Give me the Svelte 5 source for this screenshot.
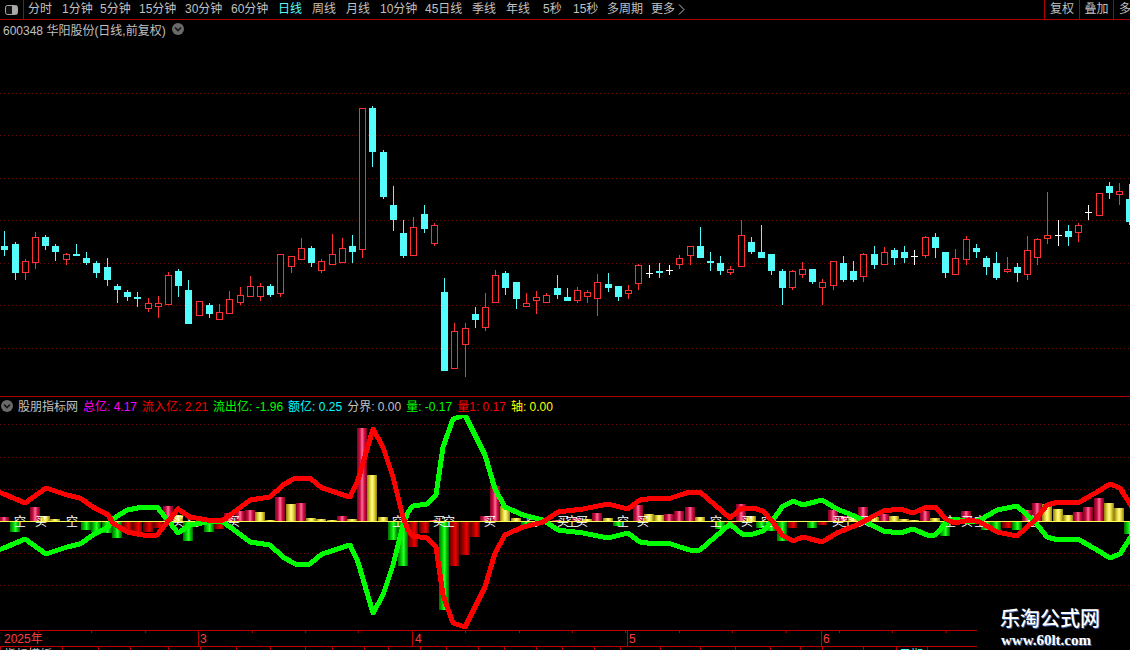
<script>
  const tabs = [
    ['分时', 34], ['1分钟', 38], ['5分钟', 39], ['15分钟', 46], ['30分钟', 46], ['60分钟', 47],
    ['日线', 34, true], ['周线', 34], ['月线', 34], ['10分钟', 45], ['45日线', 47], ['季线', 34],
    ['年线', 37], ['5秒', 30], ['15秒', 34], ['多周期', 44], ['更多', 27]
  ];

  const legend = [
    ['总亿: 4.17', 'mag'], ['流入亿: 2.21', 'red'], ['流出亿: -1.96', 'grn'], ['额亿: 0.25', 'cya'],
    ['分界: 0.00', 'gry'], ['量: -0.17', 'grn'], ['量1: 0.17', 'red'], ['轴: 0.00', 'yel']
  ];

  // x, high, bodyTop, bodyBottom, low, kind (0 cyan, 1 red, 2 white doji)
  const candles = [
    [4,231,246,250,256,0],[15,242,244,273,280,0],[25,259,261,272,280,1],[35,232,237,262,269,1],
    [45,235,237,246,250,0],[55,244,246,252,261,0],[66,253,254,259,265,1],[76,244,254,256,256,0],
    [86,252,258,263,265,0],[96,261,263,273,278,0],[107,258,267,280,286,0],[117,284,286,290,303,0],
    [127,290,292,297,301,0],[137,292,297,299,307,0],[148,298,303,308,312,1],[158,296,303,306,318,1],
    [168,272,275,304,304,1],[178,269,271,286,297,0],[188,280,290,324,324,0],[199,301,301,315,316,1],
    [209,303,305,314,318,0],[219,304,312,319,320,1],[229,291,299,313,314,1],[240,287,295,302,305,1],
    [250,276,286,296,297,1],[260,283,286,296,301,1],[270,284,286,295,297,0],[280,254,254,293,297,1],
    [291,256,256,266,273,1],[301,238,248,259,259,1],[311,246,248,263,267,0],[321,259,261,270,273,1],
    [332,234,254,264,264,1],[342,238,248,262,263,1],[352,235,246,252,263,0],[362,108,108,249,258,1],
    [372,106,108,152,167,0],[383,150,152,197,199,0],[393,186,205,220,231,0],[403,220,233,256,258,0],
    [413,217,227,255,255,1],[424,205,214,229,233,0],[434,223,225,243,246,1],[444,278,292,371,371,0],
    [454,323,331,368,368,1],[465,323,328,344,377,1],[475,307,314,320,328,0],[485,293,307,327,331,1],
    [495,270,275,302,303,1],[505,271,273,288,295,0],[516,282,282,299,309,0],[526,293,303,306,307,1],
    [536,291,297,300,314,1],[546,293,295,302,303,1],[557,275,288,295,299,0],[567,288,297,301,301,0],
    [577,287,290,300,303,1],[587,290,292,296,303,1],[597,274,282,298,316,1],[608,273,284,288,292,0],
    [618,286,286,297,301,0],[628,285,290,293,299,1],[638,264,265,283,290,1],[649,265,273,273,278,2],
    [659,263,271,273,278,0],[669,265,270,270,275,2],[679,255,258,264,269,1],[690,246,246,255,265,1],
    [700,227,246,258,258,0],[710,252,261,263,271,0],[720,256,263,271,275,0],[730,266,269,272,275,1],
    [741,220,235,266,266,1],[751,237,242,252,254,0],[761,225,252,258,258,0],[771,254,254,271,275,0],
    [782,269,271,288,305,0],[792,270,271,287,290,1],[802,262,269,274,278,1],[812,269,269,282,284,0],
    [822,279,282,287,305,1],[833,261,261,285,290,1],[843,256,263,280,282,0],[853,261,271,280,282,0],
    [863,253,254,276,282,1],[874,246,254,265,269,0],[884,247,252,264,265,1],[894,248,250,258,265,0],
    [904,246,252,258,263,0],[914,250,256,256,265,2],[925,236,237,255,258,1],[935,233,237,248,258,0],
    [945,252,252,273,278,0],[955,249,258,274,275,1],[966,236,239,259,265,1],[976,244,248,252,258,0],
    [986,256,258,267,275,0],[996,252,263,278,280,0],[1007,257,269,271,273,1],[1017,263,267,273,282,0],
    [1027,236,250,274,280,1],[1037,238,239,257,265,1],[1047,192,235,238,244,1],[1058,220,235,235,246,2],
    [1068,225,231,237,246,0],[1078,223,225,232,242,1],[1088,205,212,212,220,2],[1099,193,193,215,216,1],
    [1109,182,186,193,199,0],[1119,183,191,194,205,1],[1129,184,199,222,225,0]
  ];

  const upperGrid = [93, 135, 178, 220, 263, 305, 348];
  const lowerGrid = [424, 457, 489, 553, 585];

  const zero = 521;
  // x, level, colour (p pink up, y yellow up, g green down, r red down)
  const bars = [
    [4,517,'p'],[15,532,'g'],[35,507,'p'],[45,516,'y'],[55,519,'y'],[86,530,'g'],[96,532,'g'],[107,533,'g'],
    [117,538,'g'],[127,532,'r'],[137,532,'r'],[148,532,'r'],[158,528,'r'],[168,506,'p'],[178,515,'y'],
    [188,541,'g'],[209,532,'g'],[219,529,'r'],[229,513,'p'],[240,511,'p'],[250,510,'p'],[260,512,'y'],
    [270,520,'y'],[280,497,'p'],[291,504,'y'],[301,503,'p'],[311,518,'y'],[321,519,'y'],[332,520,'y'],
    [342,516,'p'],[352,519,'y'],[362,428,'p'],[372,475,'y'],[383,517,'y'],[393,540,'g'],[403,566,'g'],
    [413,547,'r'],[424,533,'r'],[434,520,'p'],[444,610,'g'],[454,566,'r'],[465,555,'r'],[475,537,'r'],
    [485,516,'p'],[495,486,'p'],[505,506,'y'],[516,518,'y'],[526,525,'g'],[557,520,'p'],[577,518,'p'],
    [587,519,'y'],[597,513,'p'],[608,518,'y'],[618,526,'g'],[638,505,'p'],[649,514,'y'],[659,515,'y'],
    [669,514,'p'],[679,511,'p'],[690,507,'p'],[700,517,'y'],[710,522,'g'],[720,529,'g'],[730,525,'r'],
    [741,504,'p'],[751,516,'y'],[761,528,'g'],[771,531,'g'],[782,541,'g'],[792,528,'r'],[812,528,'g'],
    [822,525,'r'],[833,510,'p'],[843,516,'p'],[853,518,'y'],[863,507,'p'],[874,517,'y'],[884,514,'p'],
    [894,516,'y'],[904,519,'y'],[914,520,'y'],[925,511,'p'],[935,518,'y'],[945,536,'g'],[966,511,'p'],
    [986,530,'g'],[996,531,'g'],[1007,528,'r'],[1017,530,'g'],[1027,510,'p'],[1037,503,'p'],[1047,504,'y'],
    [1058,509,'y'],[1068,515,'y'],[1078,512,'p'],[1088,507,'p'],[1099,498,'p'],[1109,503,'y'],[1119,508,'y'],
    [1129,534,'g']
  ];
  const fills = { p: 'url(#pink)', y: 'url(#gold)', g: 'url(#lime)', r: 'url(#crim)' };

  const inflow = [
    [-2,492],[4,494],[25,503],[46,488],[67,495],[80,498],[93,507],[108,515],[113,523],[127,532],[143,535],[157,535],
    [178,509],[190,517],[213,521],[223,520],[237,510],[250,500],[270,497],[283,485],[295,478],[310,478],[322,488],
    [350,497],[358,480],[373,429],[383,447],[393,477],[403,517],[408,530],[413,536],[427,538],[436,547],[443,595],
    [453,623],[465,627],[485,587],[495,553],[505,535],[523,527],[543,522],[558,512],[583,509],[608,504],[628,509],
    [640,500],[655,498],[668,499],[680,495],[690,492],[700,492],[730,518],[742,508],[753,508],[763,511],[773,522],
    [782,535],[793,541],[803,537],[822,542],[837,533],[857,525],[883,511],[900,509],[913,513],[927,507],[935,507],
    [947,520],[955,523],[970,520],[980,522],[997,532],[1017,536],[1035,520],[1047,505],[1058,502],[1078,503],
    [1097,492],[1110,484],[1120,488],[1132,507]
  ];
  const redLine = inflow.map(([x, y]) => `${x},${y}`).join(' ');
  const greenLine = inflow.map(([x, y]) => `${x},${2 * zero - y}`).join(' ');

  const marks = [
    [20,'空'],[41,'买'],[72,'空'],[178,'买'],[193,'空'],[234,'买'],[398,'空'],[439,'买'],[449,'空'],[490,'买'],
    [532,'空'],[563,'买'],[572,'空'],[582,'买'],[623,'空'],[643,'买'],[716,'空'],[747,'买'],[767,'空'],[838,'买'],
    [848,'空'],[864,'买'],[950,'空'],[967,'买'],[980,'空'],[1033,'空']
  ];

  const ticks = Array.from({ length: 18 }, (_, i) => Math.round(38 + 53.4 * i));
  const dividers = [198, 412, 627, 821];
  const dates = [[4, '2025年'], [200, '3'], [415, '4'], [629, '5'], [823, '6']];
  const lowerTicks = [0, 30, 62, 98, 130, 168, 200, 236, 270, 305, 332, 364, 388, 420, 446, 478, 504, 536, 562, 594, 620, 660, 700, 735, 770, 800, 822, 863, 896, 927];
</script>

<div class="screen">
  <nav class="nav">
    <div class="toggle">
      <svg width="13" height="10" viewBox="0 0 13 10"><rect x="0.5" y="0.5" width="12" height="9" rx="2" fill="#111" stroke="#a8a8a8" /><rect x="7" y="1" width="5" height="8" fill="#a8a8a8" /></svg>
    </div>
    <div class="tabs">
      {#each tabs as [label, w, active]}
        <span class="tab" class:active style:width="{w}px">{label}</span>
      {/each}
      <svg class="more" width="7" height="11" viewBox="0 0 7 11"><path d="M1 0.5 L6 5.5 L1 10.5" fill="none" stroke="#c0c0c0" /></svg>
    </div>
    <div class="tools">
      <span class="tool wide">复权</span>
      <span class="tool wide">叠加</span>
      <span class="tool">多</span>
    </div>
  </nav>

  <div class="info">
    <span>600348 华阳股份(日线,前复权)</span>
    <svg class="dot" width="12" height="12" viewBox="0 0 12 12"><circle cx="6" cy="6" r="6" fill="#6a6a6a" /><path d="M3 4.5 L6 7.5 L9 4.5" fill="none" stroke="#151515" stroke-width="1.6" /></svg>
  </div>

  <svg class="upper" width="1130" height="358" viewBox="0 38 1130 358" shape-rendering="crispEdges">
    {#each upperGrid as y}
      <line x1="0" x2="1130" y1={y + 0.5} y2={y + 0.5} stroke="#6e0c0c" stroke-dasharray="1 3" />
    {/each}
    {#each candles as [x, h, t, b, l, k]}
      {#if k === 1}
        <rect x={x} y={h} width="1" height={Math.max(0, t - h)} fill="#ff3232" />
        <rect x={x} y={b} width="1" height={Math.max(0, l - b)} fill="#ff3232" />
        <rect x={x - 2.5} y={t + 0.5} width="6" height={b - t} fill="#000" stroke="#ff3232" />
      {:else if k === 0}
        <rect x={x} y={h} width="1" height={l - h} fill="#54fcfc" />
        <rect x={x - 3} y={t} width="7" height={b - t} fill="#54fcfc" />
      {:else}
        <rect x={x} y={h} width="1" height={l - h} fill="#fff" />
        <rect x={x - 3} y={t} width="7" height="1" fill="#fff" />
      {/if}
    {/each}
  </svg>

  <div class="legend">
    <svg class="dot" width="12" height="12" viewBox="0 0 12 12"><circle cx="6" cy="6" r="6" fill="#6a6a6a" /><path d="M3 4.5 L6 7.5 L9 4.5" fill="none" stroke="#151515" stroke-width="1.6" /></svg>
    <span class="title">股朋指标网</span>
    {#each legend as [text, tone]}
      <span class={tone}>{text}</span>
    {/each}
  </div>

  <svg class="lower" width="1130" height="235" viewBox="0 415 1130 235">
    <defs>
      <linearGradient id="pink"><stop offset="0" stop-color="#800020" /><stop offset=".3" stop-color="#c81046" /><stop offset=".5" stop-color="#ff6e9a" /><stop offset=".72" stop-color="#d01048" /><stop offset="1" stop-color="#780018" /></linearGradient>
      <linearGradient id="gold"><stop offset="0" stop-color="#8c7c10" /><stop offset=".3" stop-color="#e4d436" /><stop offset=".5" stop-color="#ffff90" /><stop offset=".72" stop-color="#e4d436" /><stop offset="1" stop-color="#867610" /></linearGradient>
      <linearGradient id="lime"><stop offset="0" stop-color="#006a00" /><stop offset=".35" stop-color="#00d800" /><stop offset=".55" stop-color="#30ff30" /><stop offset=".75" stop-color="#00c000" /><stop offset="1" stop-color="#005a00" /></linearGradient>
      <linearGradient id="crim"><stop offset="0" stop-color="#5a0000" /><stop offset=".45" stop-color="#c00000" /><stop offset=".65" stop-color="#f00000" /><stop offset="1" stop-color="#660000" /></linearGradient>
    </defs>

    <g shape-rendering="crispEdges">
      {#each lowerGrid as y}
        <line x1="0" x2="1130" y1={y + 0.5} y2={y + 0.5} stroke="#6e0c0c" stroke-dasharray="1 3" />
      {/each}
      {#each bars as [x, y, c]}
        <rect x={x - 5} y={Math.min(y, zero)} width="10.2" height={Math.abs(zero - y)} fill={fills[c]} />
      {/each}
    </g>

    {#each marks as [x, m]}
      <text class="mark" x={x} y={zero + 5} text-anchor="middle">{m}</text>
    {/each}

    <rect x="0" y={zero} width="1130" height="1" fill="#ffff50" shape-rendering="crispEdges" />

    <polyline points={greenLine} fill="none" stroke="#00ff00" stroke-width="5" stroke-linejoin="round" shape-rendering="crispEdges" />
    <polyline points={redLine} fill="none" stroke="#ff0000" stroke-width="5" stroke-linejoin="round" shape-rendering="crispEdges" />

    <g shape-rendering="crispEdges" fill="#b80000">
      <rect x="0" y="630" width="977" height="1" />
      <rect x="0" y="646" width="977" height="1" />
      {#each ticks as x}
        <rect x={x} y="631" width="1" height="2" />
      {/each}
      {#each dividers as x}
        <rect x={x} y="631" width="1" height="15" />
      {/each}
      {#each lowerTicks as x}
        <rect x={x} y="647" width="1" height="3" />
      {/each}
    </g>
    {#each dates as [x, d]}
      <text class="date" x={x} y="643">{d}</text>
    {/each}
    <text class="cut" x="4" y="659">指标模板</text>
    <text class="cut cutc" x="899" y="659">日期</text>
  </svg>

  <div class="mark-brand">
    <div class="cn">乐淘公式网</div>
    <div class="en">www.60lt.com</div>
  </div>
</div>

<style>
  :global(body) {
    margin: 0;
    background: #000;
  }
  .screen {
    position: relative;
    width: 1130px;
    height: 650px;
    background: #000;
    overflow: hidden;
    display: flex;
    flex-direction: column;
    font-family: "Liberation Sans", "Noto Sans CJK SC", sans-serif;
    font-size: 12px;
    color: #c0c0c0;
  }
  svg {
    display: block;
    flex: none;
  }
  .nav {
    flex: none;
    height: 19px;
    display: flex;
    border-bottom: 1px solid #b00000;
  }
  .toggle {
    width: 23px;
    display: flex;
    align-items: center;
    justify-content: center;
    border-right: 1px solid #b00000;
  }
  .tabs {
    flex: 1;
    display: flex;
    align-items: center;
    padding-left: 4px;
  }
  .tab {
    flex: none;
    white-space: nowrap;
    line-height: 19px;
  }
  .active {
    color: #54fcfc;
  }
  .tools {
    display: flex;
  }
  .tool {
    width: 11px;
    line-height: 19px;
    padding-left: 5px;
    border-left: 1px solid #b00000;
    white-space: nowrap;
    overflow: hidden;
  }
  .tool.wide {
    width: 28.5px;
  }
  .info {
    flex: none;
    height: 18px;
    padding-left: 3px;
    display: flex;
    align-items: center;
    gap: 6px;
    white-space: nowrap;
  }
  .upper {
    overflow: hidden;
  }
  .legend {
    flex: none;
    box-sizing: border-box;
    height: 19px;
    padding: 0 0 1px 1px;
    border-top: 1px solid #b00000;
    display: flex;
    align-items: center;
    gap: 5px;
    white-space: nowrap;
  }
  .mag { color: #ff00ff; }
  .red { color: #ff0000; }
  .grn { color: #00ff00; }
  .cya { color: #00ffff; }
  .gry { color: #c0c0c0; }
  .yel { color: #ffff00; }
  .mark {
    fill: #fff;
    font-size: 12px;
    font-family: "Noto Sans CJK SC", sans-serif;
  }
  .date {
    fill: #ff3c3c;
    font-size: 12px;
    font-family: "Liberation Sans", "Noto Sans CJK SC", sans-serif;
  }
  .cut {
    fill: #c0c0c0;
    font-size: 12px;
    font-family: "Noto Sans CJK SC", sans-serif;
  }
  .cutc {
    fill: #54fcfc;
  }
  .mark-brand {
    position: absolute;
    left: 977px;
    right: 0;
    bottom: 0;
    height: 44px;
    background: #000;
    text-align: center;
    color: #fff;
    text-shadow: 1px 1px 0 #3a5ea0;
  }
  .cn {
    font-family: "Noto Sans CJK SC", sans-serif;
    font-weight: 500;
    font-size: 20px;
    line-height: 26px;
    margin-top: -1px;
    padding-right: 7px;
  }
  .en {
    font-family: "Liberation Serif", serif;
    font-weight: 700;
    font-size: 15px;
    line-height: 16px;
    margin-top: 1px;
    padding-right: 15px;
  }
</style>
